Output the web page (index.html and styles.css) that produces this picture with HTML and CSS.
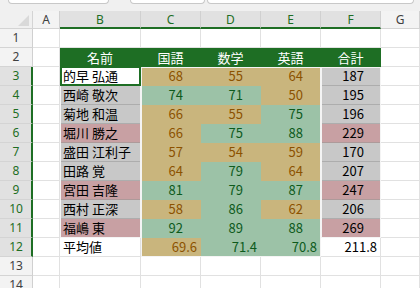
FILE: index.html
```html
<!DOCTYPE html>
<html lang="ja">
<head>
<meta charset="utf-8">
<link rel="stylesheet" href="styles.css">
</head>
<body>
<div class="topbar">
  <div class="tab t1"></div>
  <div class="tab t2"></div>
  <div class="tab t3"></div>
</div>
<div class="wrap">
<div class="sheet">
  <div class="corner"><svg width="33" height="18" viewBox="0 0 33 18"><polygon points="18,15 29,15 29,4" fill="#d9d9d9"/></svg></div>
  <div class="ch">A</div><div class="ch sel">B</div><div class="ch sel">C</div><div class="ch sel">D</div><div class="ch sel">E</div><div class="ch sel">F</div><div class="ch">G</div>

  <div class="rh">1</div><div class="c"></div><div class="c"></div><div class="c"></div><div class="c"></div><div class="c"></div><div class="c"></div><div class="c"></div>

  <div class="rh">2</div><div class="c"></div><div class="c hd">名前</div><div class="c hd">国語</div><div class="c hd">数学</div><div class="c hd">英語</div><div class="c hd">合計</div><div class="c"></div>

  <div class="rh sel">3</div><div class="c"></div><div class="c n act">的早 弘通</div><div class="c v t">68</div><div class="c v t">55</div><div class="c v t">64</div><div class="c tot gr">187</div><div class="c"></div>

  <div class="rh sel">4</div><div class="c"></div><div class="c n gr">西崎 敬次</div><div class="c v g">74</div><div class="c v g">71</div><div class="c v t">50</div><div class="c tot gr">195</div><div class="c"></div>

  <div class="rh sel">5</div><div class="c"></div><div class="c n gr">菊地 和温</div><div class="c v t">66</div><div class="c v t">55</div><div class="c v g">75</div><div class="c tot gr">196</div><div class="c"></div>

  <div class="rh sel">6</div><div class="c"></div><div class="c n p">堀川 勝之</div><div class="c v t">66</div><div class="c v g">75</div><div class="c v g">88</div><div class="c tot p">229</div><div class="c"></div>

  <div class="rh sel">7</div><div class="c"></div><div class="c n gr">盛田 江利子</div><div class="c v t">57</div><div class="c v t">54</div><div class="c v t">59</div><div class="c tot gr">170</div><div class="c"></div>

  <div class="rh sel">8</div><div class="c"></div><div class="c n gr">田路 覚</div><div class="c v t">64</div><div class="c v g">79</div><div class="c v t">64</div><div class="c tot gr">207</div><div class="c"></div>

  <div class="rh sel">9</div><div class="c"></div><div class="c n p">宮田 吉隆</div><div class="c v g">81</div><div class="c v g">79</div><div class="c v g">87</div><div class="c tot p">247</div><div class="c"></div>

  <div class="rh sel">10</div><div class="c"></div><div class="c n gr">西村 正深</div><div class="c v t">58</div><div class="c v g">86</div><div class="c v t">62</div><div class="c tot gr">206</div><div class="c"></div>

  <div class="rh sel">11</div><div class="c"></div><div class="c n p">福嶋 東</div><div class="c v g">92</div><div class="c v g">89</div><div class="c v g">88</div><div class="c tot p">269</div><div class="c"></div>

  <div class="rh sel">12</div><div class="c"></div><div class="c n">平均値</div><div class="c v avg t">69.6</div><div class="c v avg g">71.4</div><div class="c v avg g">70.8</div><div class="c tot avg">211.8</div><div class="c"></div>

  <div class="rh">13</div><div class="c"></div><div class="c"></div><div class="c"></div><div class="c"></div><div class="c"></div><div class="c"></div><div class="c"></div>

  <div class="rh">14</div><div class="c"></div><div class="c"></div><div class="c"></div><div class="c"></div><div class="c"></div><div class="c"></div><div class="c"></div>
</div>
<div class="range r-names"></div>
<div class="range r-scores"></div>
<div class="range r-totals"></div>
<div class="active"></div>
</div>
</body>
</html>
```

FILE: styles.css
```css
html, body {
  margin: 0;
  padding: 0;
}
body {
  width: 420px;
  height: 288px;
  overflow: hidden;
  background: #ffffff;
  font-family: "Noto Sans CJK JP", "Noto Sans", sans-serif;
}

.topbar {
  height: 11px;
  background: #f0f0f0;
  display: flex;
  align-items: flex-start;
}
.tab {
  height: 3px;
  background: #ffffff;
  border: 1px solid #c8c8c8;
  border-top: none;
  border-radius: 0 0 6px 6px;
}
.t1 { margin-left: 8px; width: 99px; }
.t2 { margin-left: 21px; width: 73px; }
.t3 { margin-left: 2px; width: 205px; }

.wrap {
  position: relative;
}

.sheet {
  display: grid;
  grid-template-columns: 33px 27px 81px 60px 60px 60px 60px 1fr;
  grid-template-rows: 18px repeat(14, 19px);
}
.sheet > div {
  box-sizing: border-box;
}

.corner {
  background: #f0f0f0;
  border-right: 1px solid #d4d4d4;
  border-bottom: 1px solid #d4d4d4;
}
.corner svg { display: block; }

.ch {
  background: #f3f3f3;
  border-right: 1px solid #d0d0d0;
  border-bottom: 1px solid #d4d4d4;
  font-family: "Noto Sans", sans-serif;
  font-size: 12px;
  line-height: 17px;
  text-align: center;
  color: #404040;
}
.ch.sel {
  background: #e1e1e1;
  color: #1e6e24;
  border-bottom: 2px solid #1e6e24;
}

.rh {
  background: #f3f3f3;
  border-right: 1px solid #d0d0d0;
  border-bottom: 1px solid #d4d4d4;
  font-family: "Noto Sans", sans-serif;
  font-size: 12px;
  line-height: 18px;
  text-align: center;
  color: #404040;
}
.rh.sel {
  background: #e1e1e1;
  color: #1e6e24;
  border-right: 2px solid #1e6e24;
  padding-left: 1px;
}

.c {
  border-right: 1px solid #e1e1e1;
  border-bottom: 1px solid #e1e1e1;
  font-size: 13px;
  line-height: 18px;
  white-space: nowrap;
  overflow: hidden;
  color: #000000;
}

.hd {
  background: #1e6e24;
  border-color: #1e6e24;
  color: #ffffff;
  text-align: center;
  line-height: 19px;
}

.n {
  padding-left: 3px;
}

.v {
  text-align: right;
  padding-right: 17px;
}
.tot {
  text-align: right;
  padding-right: 16px;
}
.avg {
  padding-right: 3px;
}

.t {
  background: #c9b57d;
  border-color: #c9b57d;
  color: #8c5200;
}
.g {
  background: #9cc2a7;
  border-color: #9cc2a7;
  color: #0d5a1c;
}
.gr {
  background: #c8c8c8;
  border-bottom-color: #adadad;
  border-right-color: #adadad;
}
.p {
  background: #c8a0a3;
  border-bottom-color: #ad9a9a;
  border-right-color: #ad9a9a;
}
.act {
  background: #ffffff;
}

.range {
  position: absolute;
  box-sizing: border-box;
  border: 1px solid #f4f4f4;
  pointer-events: none;
}
.r-names { left: 60px; top: 56px; width: 81px; height: 171px; }
.r-scores { left: 141px; top: 56px; width: 180px; height: 190px; }
.r-totals { left: 321px; top: 56px; width: 60px; height: 171px; }

.active {
  position: absolute;
  box-sizing: border-box;
  left: 60px;
  top: 55px;
  width: 81px;
  height: 20px;
  border: 2px solid #1e6e24;
  pointer-events: none;
}
```
